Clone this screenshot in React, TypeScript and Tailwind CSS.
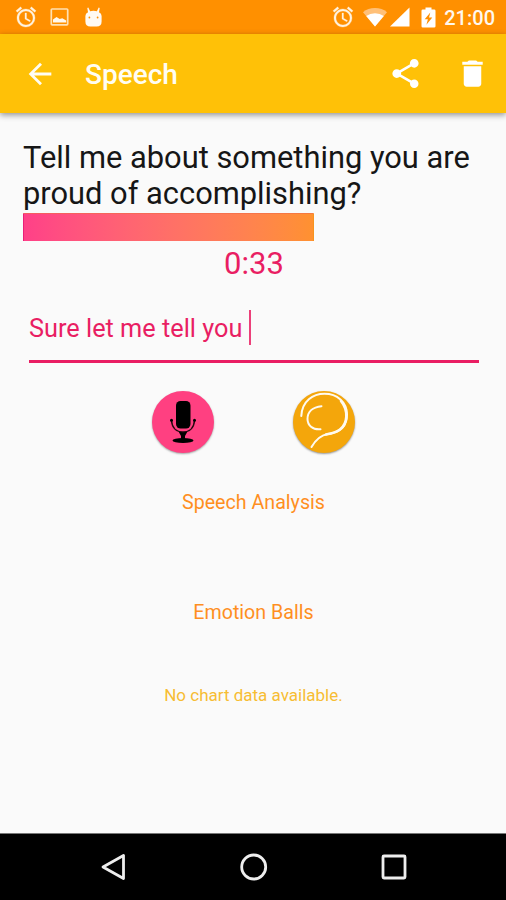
import React from "react";

function AlarmIcon() {
  return (
    <svg className="h-6 w-6 shrink-0" viewBox="0 0 24 24" fill="#fff3e0" stroke="#fff3e0" strokeWidth="0.3">
      <path d="M22 5.72l-4.6-3.86-1.29 1.53 4.6 3.86L22 5.72zM7.88 3.39L6.6 1.86 2 5.71l1.29 1.53 4.59-3.85zM12.5 8H11v6l4.75 2.85.75-1.23-4-2.37V8zM12 4c-4.97 0-9 4.03-9 9s4.02 9 9 9a9 9 0 1 0 0-18zm0 16c-3.87 0-7-3.13-7-7s3.13-7 7-7 7 3.13 7 7-3.13 7-7 7z" />
    </svg>
  );
}

function StatusBar() {
  return (
    <header className="flex h-[34px] items-center bg-[#ff9000] pl-[14px] pr-[11px]">
      <AlarmIcon />
      <svg className="ml-[12px] h-[18px] w-[19px]" viewBox="0 0 19 18" fill="none">
        <rect x="1.3" y="1" width="16.4" height="15.8" rx="0.8" stroke="#ffe0b2" strokeWidth="1.7" />
        <path d="M3 14.5V11.5L6.5 9l3.2 2 2.6-.8 3.9 2.3v2z" fill="#fff8ee" />
      </svg>
      <svg className="ml-[15px] h-5 w-[19px]" viewBox="0 0 19 20" fill="#fffaf3">
        <path d="M4.3 0.5 6.1 4.2Q9.5 3.2 12.9 4.2L14.7.5l1 .5-.7 4.3Q17.6 6.5 17.6 9v5.5q0 5-5 5H6.4q-5 0-5-5V9Q1.4 6.5 4 5.3L3.300 1z" />
        <circle cx="5.4" cy="10.5" r="0.9" fill="#ff9000" />
        <circle cx="13.600" cy="10.5" r="0.9" fill="#ff9000" />
      </svg>
      <div className="ml-auto flex items-center">
        <AlarmIcon />
        <svg className="ml-[8px] h-5 w-6" viewBox="0 0 24 20">
          <path d="M0 5.200Q5 1 12 1t12 4.200L12 19.500z" fill="#ffc078" />
          <path d="M3.200 9Q7 6.300 12 6.300T20.800 9L12 19.500z" fill="#fff" />
        </svg>
        <svg className="ml-[3px] h-5 w-5" viewBox="0 0 20 20">
          <path d="M19.500.5v19H0z" fill="#fff" />
        </svg>
        <svg className="ml-[11px] h-[21px] w-[15px]" viewBox="0 0 15 21">
          <path d="M4.500.5h6v2h2.700q1.300 0 1.300 1.300v15.400q0 1.300-1.300 1.300H1.800Q.5 20.500.5 19.200V3.800Q.5 2.500 1.800 2.500h2.700z" fill="#fff" />
          <path d="M9.300 5.500 3.700 12.300h3.200l-1.500 5.500 5.900-7.300H8z" fill="#ff9000" />
        </svg>
        <span className="ml-[8px] mt-px text-[20px] font-medium leading-6 text-[#fff8ee]">21:00</span>
      </div>
    </header>
  );
}

function Toolbar() {
  return (
    <nav className="relative flex h-[79px] items-center bg-[#ffc107] pl-[23px] pr-[16px] text-[#fffdf3] shadow-[0_2px_6px_rgba(0,0,0,0.42)]">
      <svg className="h-[34px] w-[34px]" viewBox="0 0 24 24" fill="currentColor">
        <path d="M20 11H7.830l5.590-5.590L12 4l-8 8 8 8 1.410-1.410L7.830 13H20v-2z" />
      </svg>
      <h1 className="ml-[28px] mt-[2px] text-[28px] font-medium leading-8">Speech</h1>
      <svg className="ml-auto h-[35px] w-[35px]" viewBox="0 0 24 24" fill="#fff">
        <path d="M18 16.080c-.76 0-1.440.3-1.960.77L8.910 12.700c.05-.23.09-.46.09-.7s-.04-.47-.09-.7l7.050-4.110c.54.5 1.250.81 2.040.81 1.660 0 3-1.340 3-3s-1.340-3-3-3-3 1.340-3 3c0 .24.04.47.09.7L8.040 9.810C7.500 9.310 6.790 9 6 9c-1.660 0-3 1.340-3 3s1.340 3 3 3c.79 0 1.500-.31 2.040-.81l7.120 4.160c-.05.21-.08.43-.08.65 0 1.610 1.310 2.920 2.920 2.920s2.920-1.310 2.920-2.920-1.310-2.920-2.920-2.920z" />
      </svg>
      <svg className="ml-[32px] h-[35px] w-[35px]" viewBox="0 0 24 24" fill="#fff">
        <path d="M6 19c0 1.100.9 2 2 2h8c1.100 0 2-.9 2-2V7H6v12zM19 4h-3.500l-1-1h-5l-1 1H5v2h14V4z" />
      </svg>
    </nav>
  );
}

function MicButton() {
  return (
    <button className="h-[62px] w-[62px] rounded-full bg-[#ff4081] shadow-[0_1px_2px_rgba(0,0,0,0.35)]">
      <svg className="h-[62px] w-[62px]" viewBox="0 0 62 62">
        <rect x="24" y="10" width="14.500" height="27.500" rx="4.500" fill="#000" />
        <path d="M19.500 29.500C20 37 24.500 41 31 41s11-4 11.500-11.500" fill="none" stroke="#26080f" strokeWidth="1.500" />
        <circle cx="19.500" cy="29.300" r="1.500" />
        <circle cx="42.500" cy="29.300" r="1.500" />
        <path d="M26.500 40.500q4.500 1.500 9 0L33 45v3h-4v-3z" />
        <ellipse cx="31" cy="49.500" rx="10.500" ry="2.500" />
      </svg>
    </button>
  );
}

function BallButton() {
  return (
    <button className="h-[62px] w-[62px] rounded-full bg-[#f4a60b] shadow-[0_1px_2px_rgba(0,0,0,0.4)]">
      <svg className="h-[62px] w-[62px]" viewBox="0 0 62 62" fill="none" stroke="#fffaf0" strokeLinecap="round">
        <path d="M8.300 25C9 10 20 2.700 31.500 2.700 44 2.700 54 11 54 23.500 54 36 46 41.500 35 43c-8 1.200-13 7-16.500 13" strokeWidth="2" />
        <path d="M48 10C56 20 54.500 33 47 38.500c-5 3.700-10 4.300-14 5" strokeWidth="2.600" />
        <path d="M28.500 15.200C19.500 16 14.500 21 14.500 28c0 6 5 11 13 10.300" strokeWidth="2" />
      </svg>
    </button>
  );
}

export default function App() {
  return (
    <div className="flex h-[900px] w-[506px] flex-col overflow-hidden bg-[#fafafa] font-['Roboto',sans-serif]">
      <StatusBar />
      <Toolbar />
      <main className="flex flex-1 flex-col">
        <h2 className="ml-[23px] mt-[27px] whitespace-nowrap text-[30.850px] leading-9 text-[#161616]">
          Tell me about something you are
          <br />
          proud of accomplishing?
        </h2>
        <div className="ml-[23px] mt-px h-7 w-[291px] border border-b-0 border-l-[#e91e78] border-r-[#f7931e] border-t-[#f06a48]/60 bg-linear-to-r from-[#ff4088] to-[#ff9130]" />
        <p className="mt-[5px] pl-[2px] text-center text-[31px] leading-9 text-[#e91e63]">0:33</p>
        <div className="ml-[29px] mt-[28px] flex h-[53px] w-[450px] items-start border-b-[3px] border-[#e91e63]">
          <span className="mt-[4px] whitespace-pre text-[25.300px] leading-[30px] text-[#e91e63]">Sure let me tell you </span>
          <span className="h-[35px] w-[2px] bg-[#ec407a]" />
        </div>
        <div className="mt-[28px] flex justify-center gap-[79px]">
          <MicButton />
          <BallButton />
        </div>
        <p className="mt-[38px] pl-px text-center text-[19.650px] leading-6 text-[#ff8f1f]">Speech Analysis</p>
        <p className="mt-[86px] pl-px text-center text-[19.650px] leading-6 text-[#ff8f1f]">Emotion Balls</p>
        <p className="mt-[60px] pl-px text-center text-[17px] leading-5 text-[#f7bd33]">No chart data available.</p>
      </main>
      <footer className="flex h-[67px] items-center justify-between border-t border-[#777] bg-black pl-[99px] pr-[97px]">
        <svg className="h-[30px] w-[30px]" viewBox="0 0 30 30" fill="none" stroke="#eee" strokeWidth="2.800" strokeLinejoin="round">
          <path d="M24.500 3.500v23L4 15z" />
        </svg>
        <svg className="h-[30px] w-[30px]" viewBox="0 0 30 30" fill="none" stroke="#eee" strokeWidth="2.800">
          <circle cx="14.700" cy="15" r="12" />
        </svg>
        <svg className="h-[30px] w-[30px]" viewBox="0 0 30 30" fill="none" stroke="#eee" strokeWidth="2.800">
          <rect x="4" y="4" width="22" height="22" rx="1" />
        </svg>
      </footer>
    </div>
  );
}
